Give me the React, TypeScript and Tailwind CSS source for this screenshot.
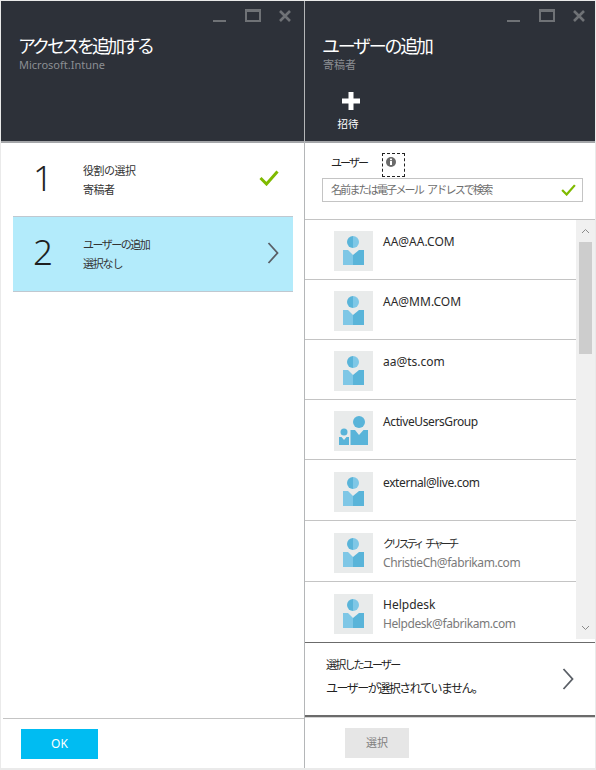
import React from "react";

const users = [
  { name: "AA@AA.COM", h: "h-[60px]", pt: "pt-[11px]", nameCls: "" },
  { name: "AA@MM.COM", h: "h-[60px]", pt: "pt-[11px]", nameCls: "" },
  { name: "aa@ts.com", h: "h-[60px]", pt: "pt-[11px]", nameCls: "" },
  { name: "ActiveUsersGroup", h: "h-[60px]", pt: "pt-[11px]", nameCls: "tracking-[-0.4px]", group: true },
  { name: "external@live.com", h: "h-[61px]", pt: "pt-[12px]", nameCls: "tracking-[-0.4px]" },
  {
    name: "クリスティ チャーチ",
    mail: "ChristieCh@fabrikam.com",
    h: "h-[61px]",
    pt: "pt-[12px]",
    nameCls: "text-[11px] tracking-[-3.2px] [word-spacing:4px]",
  },
  { name: "Helpdesk", mail: "Helpdesk@fabrikam.com", h: "h-[60px]", pt: "pt-[12px]", nameCls: "", last: true },
];

function WindowControls() {
  return (
    <div className="flex h-[24px] items-start justify-end">
      <svg width="78" height="24" viewBox="0 0 78 24" className="text-[#6f7276]">
        <rect x="0" y="19" width="13" height="2" fill="currentColor" />
        <rect x="33" y="9" width="14" height="11" fill="none" stroke="currentColor" strokeWidth="2" />
        <rect x="32" y="8" width="16" height="3" fill="currentColor" />
        <path d="M67 10 L77 20 M77 10 L67 20" stroke="currentColor" strokeWidth="2.6" />
      </svg>
    </div>
  );
}

function Check({ size = 20 }: { size?: number }) {
  return (
    <svg width={size} height={size * 0.8} viewBox="0 0 20 16">
      <path d="M1.5 8 L7.5 14 L18.5 1.5" fill="none" stroke="#7fba00" strokeWidth="3" />
    </svg>
  );
}

function Chevron() {
  return (
    <svg width="12" height="22" viewBox="0 0 12 22">
      <path d="M1.5 1 L10.5 11 L1.5 21" fill="none" stroke="#5a5f66" strokeWidth="1.8" />
    </svg>
  );
}

function UserAvatar({ group }: { group?: boolean }) {
  return (
    <div className="h-[40px] w-[39px] shrink-0 bg-[#e9ebeb]">
      {group ? (
        <svg width="39" height="40" viewBox="0 0 39 40">
          <circle cx="25" cy="11" r="6" fill="#59b4d9" />
          <path d="M16.5 19 H21 L25 24 L29.5 19 H34 V34 H16.5 Z" fill="#59b4d9" />
          <circle cx="10" cy="21" r="3.5" fill="#59b4d9" />
          <path d="M5 26 H7.5 L10 29 L12.5 26 H15 V34 H5 Z" fill="#59b4d9" />
        </svg>
      ) : (
        <svg width="39" height="40" viewBox="0 0 39 40">
          <path d="M19 5 A6 6 0 0 0 19 17 Z" fill="#59b4d9" />
          <path d="M19 5 A6 6 0 0 1 19 17 Z" fill="#7fc7e6" />
          <path d="M9 19 H14 L19 24 V34 H9 Z" fill="#7fc7e6" />
          <path d="M19 24 L25 19 H30 V34 H19 Z" fill="#59b4d9" />
        </svg>
      )}
    </div>
  );
}

function StepRow({
  num,
  title,
  sub,
  active,
  icon,
}: {
  num: string;
  title: React.ReactNode;
  sub: React.ReactNode;
  active?: boolean;
  icon: React.ReactNode;
}) {
  return (
    <div
      className={
        active
          ? "ml-[10px] mr-[11px] flex h-[76px] items-center border-y border-[#c0c8d0] bg-[#b3ebfb]"
          : "ml-[10px] mr-[11px] flex h-[73px] items-center"
      }
    >
      <div className="w-[70px] pb-[5px] pr-[10px] text-center text-[35px] font-light leading-none text-[#1f1f1f]">
        {num}
      </div>
      <div className="flex-1 text-[11px] leading-[19px] tracking-[-0.5px] text-[#333]">
        <div>{title}</div>
        <div>{sub}</div>
      </div>
      <div className="flex w-[34px] justify-start pb-[3px]">{icon}</div>
    </div>
  );
}

export default function App() {
  return (
    <div className="flex h-[770px] w-[596px] bg-[#eaeaea] pl-px pr-px pt-px font-['Noto_Sans','Noto_Sans_CJK_JP',sans-serif]">
      {/* left blade */}
      <div className="flex h-[767px] w-[303px] flex-col bg-white">
        <div className="h-[140px] bg-[#2d3139] pl-[18px] pr-[13px]">
          <WindowControls />
          <h1 className="mt-[9px] -ml-px text-[18px] leading-[24px] tracking-[-3px] text-white">
            アクセスを追加する
          </h1>
          <div className="text-[11px] leading-[14px] text-[#8b8e93]">Microsoft.Intune</div>
        </div>
        <div className="flex flex-1 flex-col border-t-2 border-[#a4a6a9] pl-[2px]">
          <StepRow num="1" title="役割の選択" sub="寄稿者" icon={<Check />} />
          <StepRow
            num="2"
            title={<span className="tracking-[-1.5px]">ユーザーの追加</span>}
            sub={<span className="tracking-[-1.2px]">選択なし</span>}
            active
            icon={
              <div className="ml-[8px] flex">
                <Chevron />
              </div>
            }
          />
          <div className="flex-1" />
          <div className="h-[50px] border-t border-[#c4c4c4] pl-[18px] pt-[10px]">
            <button className="h-[30px] w-[77px] bg-[#00bcf2] text-[12px] text-white">OK</button>
          </div>
        </div>
      </div>

      {/* right blade */}
      <div className="flex h-[767px] flex-1 flex-col border-l border-[#b4b6b8] bg-white">
        <div className="h-[140px] bg-[#2d3139] pl-[18px] pr-[10px]">
          <WindowControls />
          <h1 className="mt-[9px] -ml-px text-[18px] leading-[24px] tracking-[-2.3px] text-white">
            ユーザーの追加
          </h1>
          <div className="text-[11px] leading-[14px] text-[#8b8e93]">寄稿者</div>
          <div className="ml-[13px] mt-[20px] flex w-[24px] flex-col items-center">
            <svg width="18" height="18" viewBox="0 0 18 18" className="ml-[6px]">
              <path d="M6.5 0 H11.5 V6.5 H18 V11.5 H11.5 V18 H6.5 V11.5 H0 V6.5 H6.5 Z" fill="#fff" />
            </svg>
            <div className="mt-[7px] text-[10.5px] leading-[14px] text-white">招待</div>
          </div>
        </div>
        <div className="flex flex-1 flex-col border-t-2 border-[#a4a6a9]">
          <div className="h-[77px] border-b border-[#c4c4c4] pl-[17px] pr-[12px]">
            <div className="flex h-[35px] items-start pl-[9px] pt-[10px]">
              <span className="w-[51px] pt-px text-[11px] leading-[18px] tracking-[-1.9px] text-[#222]">ユーザー</span>
              <div className="flex h-[24px] w-[23px] justify-start border border-dashed border-[#222] pl-[2px] pt-[2px]">
                <svg width="12" height="12" viewBox="0 0 12 12">
                  <circle cx="6" cy="6" r="5" fill="#6a6a6a" />
                  <rect x="5" y="5" width="2" height="4" fill="#fff" />
                  <rect x="5" y="2.6" width="2" height="1.6" fill="#fff" />
                </svg>
              </div>
            </div>
            <div className="flex h-[24px] items-center justify-between border border-[#c4c4c4] pl-[8px] pr-[6px]">
              <span className="text-[11px] tracking-[-1.8px] [word-spacing:3px] text-[#6e6e6e]">名前または電子メール アドレスで検索</span>
              <Check size={15} />
            </div>
          </div>

          <div className="flex h-[423px] border-b border-[#6b6b6b]">
            <div className="flex-1">
              {users.map((u) => (
                <div
                  key={u.name}
                  className={`flex ${u.h} ${u.pt} pl-[29px] ${u.last ? "" : "border-b border-[#c4c4c4]"}`}
                >
                  <UserAvatar group={u.group} />
                  <div className="pl-[10px] pt-px text-[12px] leading-[19px]">
                    <div className={`text-[#2a2a2a] ${u.nameCls}`}>{u.name}</div>
                    {u.mail && <div className="tracking-[-0.42px] text-[#7a7a7a]">{u.mail}</div>}
                  </div>
                </div>
              ))}
            </div>
            <div className="mb-[3px] flex w-[19px] flex-col items-center bg-[#f0f0f0]">
              <svg width="9" height="6" viewBox="0 0 9 6" className="mt-[8px]">
                <path d="M1 5 L4.5 1.5 L8 5" fill="none" stroke="#8a8a8a" strokeWidth="1" />
              </svg>
              <div className="mt-[8px] h-[112px] w-[13px] bg-[#cdcdcd]" />
              <div className="flex-1" />
              <svg width="9" height="6" viewBox="0 0 9 6" className="mb-[8px]">
                <path d="M1 1 L4.5 4.5 L8 1" fill="none" stroke="#8a8a8a" strokeWidth="1" />
              </svg>
            </div>
          </div>

          <div className="flex h-[74px] items-center justify-between border-b-2 border-[#6b6b6b] pl-[21px] pr-[21px]">
            <div className="mb-[4px] text-[#222]">
              <div className="text-[11px] leading-[20px] tracking-[-1.8px]">選択したユーザー</div>
              <div className="mt-[4px] text-[12px] leading-[20px] tracking-[-1.5px]">
                ユーザーが選択されていません。
              </div>
            </div>
            <Chevron />
          </div>

          <div className="flex-1 border-t border-[#d4d4d4] pl-[40px] pt-[10px]">
            <button className="h-[30px] w-[64px] bg-[#e6e6e6] text-[11px] text-[#7f7f7f]">選択</button>
          </div>
        </div>
      </div>
    </div>
  );
}
